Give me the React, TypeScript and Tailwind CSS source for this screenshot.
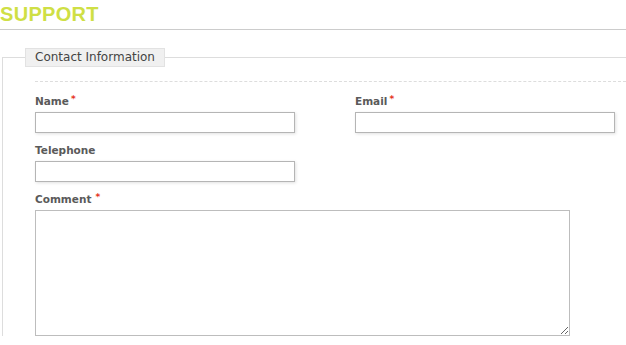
import React from 'react';

function Field({ label, required, className = '' }: { label: string; required?: boolean; className?: string }) {
    return (
        <div className={`flex flex-col ${className}`}>
            <label className="mb-[2px] h-[17px] text-[10.5px] leading-[17px] font-bold text-[#5a5a5a]">
                {label}
                {required && <span className="ml-[2px] align-top text-[9px] leading-[12px] text-[#e5341c]">*</span>}
            </label>
            <input
                type="text"
                className="h-[21px] w-[260px] border border-[#b5b5b5] bg-white shadow-[1px_1px_3px_rgba(0,0,0,0.12)] outline-none"
            />
        </div>
    );
}

export default function App() {
    return (
        <div className="h-[345px] w-[626px] overflow-hidden bg-white font-['DejaVu_Sans',sans-serif]">
            {/* Page title */}
            <h1 className="h-[30px] border-b border-[#cccccc] pt-[4px] font-['Liberation_Sans',Arial,sans-serif] text-[20px] leading-[20px] font-bold tracking-[0.3px] text-[#cfdf45]">
                SUPPORT
            </h1>

            <fieldset className="mt-[18px] ml-[2px] border-t border-l border-[#dddddd] p-0">
                <legend className="ml-[22px] h-[19px] border border-[#e2e2e2] bg-[#f0f0f0] px-[9px] text-[12px] leading-[17px] text-[#444444]">
                    Contact Information
                </legend>

                <div className="pl-[32px]">
                    <div className="mt-[14px] border-t border-dashed border-[#dddddd]" />

                    <div className="mt-[11px] flex flex-col gap-[9px]">
                        <div className="flex gap-[60px]">
                            <Field label="Name" required />
                            <Field label="Email" required />
                        </div>
                        <Field label="Telephone" />
                        <div className="flex flex-col">
                            <label className="mb-[2px] h-[17px] text-[10.5px] leading-[17px] font-bold text-[#5a5a5a]">
                                Comment
                                <span className="ml-[4px] align-top text-[9px] leading-[12px] text-[#e5341c]">*</span>
                            </label>
                            <textarea className="h-[126px] w-[535px] border border-[#bdbdbd] bg-white outline-none" />
                        </div>
                    </div>
                </div>
            </fieldset>
        </div>
    );
}
